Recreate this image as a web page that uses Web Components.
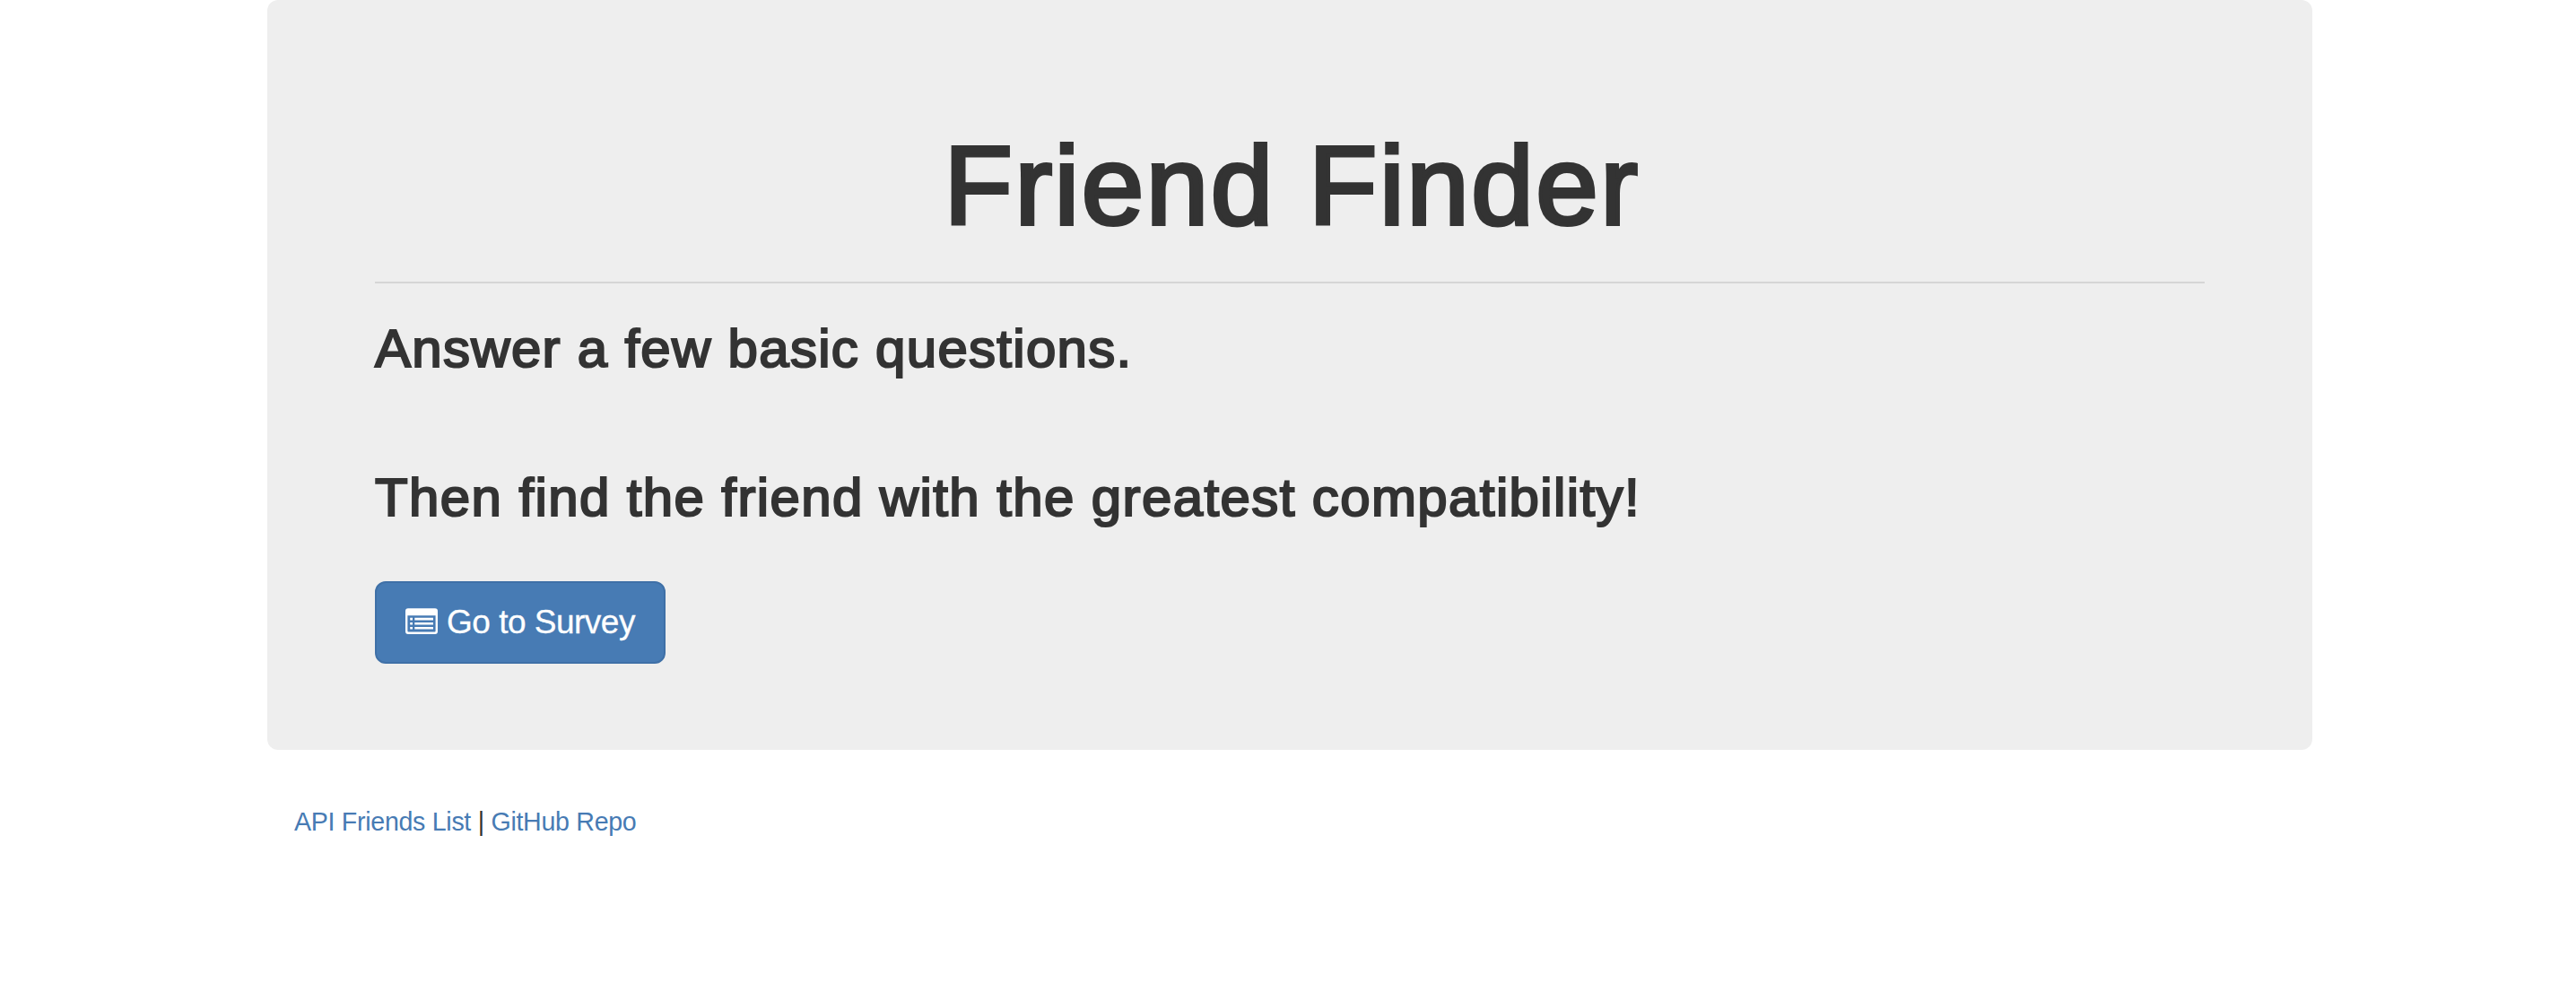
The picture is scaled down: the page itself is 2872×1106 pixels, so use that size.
<!DOCTYPE html>
<html lang="en">
<head>
<meta charset="utf-8">
<title>Friend Finder</title>
<style>
body { margin: 0; background: #fff; color: #333; font-family: "Liberation Sans", Arial, sans-serif; }
</style>
</head>
<body>
<friend-page>
  <jumbo-panel>
    <page-title slot="title">Friend Finder</page-title>
    <lead-line style="--ls:1.29px">Answer a few basic questions.</lead-line>
    <lead-line style="--ls:1.39px">Then find the friend with the greatest compatibility!</lead-line>
    <survey-button slot="action">Go to Survey</survey-button>
  </jumbo-panel>
  <page-footer></page-footer>
</friend-page>
<script>
const define = (name, html) => customElements.define(name, class extends HTMLElement {
  constructor() {
    super();
    this.attachShadow({ mode: "open" }).innerHTML = html;
  }
});

define("friend-page", `
<style>
:host { display: flex; flex-direction: column; width: 2280px; margin-left: 298px; }
</style><slot></slot>`);

define("jumbo-panel", `
<style>
:host { display: flex; flex-direction: column; align-items: stretch; box-sizing: border-box; height: 836px; padding: 137px 120px 96px; background: #eee; border-radius: 12px; }
hr { width: 100%; height: 2px; margin: 38px 0 40px; border: 0; background: #d5d5d5; }
.lines { display: flex; flex-direction: column; gap: 100px; }
.action { display: flex; margin-top: 60px; }
</style>
<slot name="title"></slot>
<hr>
<div class="lines"><slot></slot></div>
<div class="action"><slot name="action"></slot></div>`);

define("page-title", `
<style>
:host { display: block; height: 139px; }
h1 { margin: 0; padding-left: 5px; font-size: 125px; font-weight: 400; line-height: 139px; text-align: center; letter-spacing: 2.5px; -webkit-text-stroke: 4.2px #333; white-space: nowrap; }
</style><h1><slot></slot></h1>`);

define("lead-line", `
<style>
:host { display: block; height: 66px; }
h2 { margin: 0; font-size: 60px; font-weight: 400; line-height: 66px; letter-spacing: var(--ls, 0); -webkit-text-stroke: 2.2px #333; white-space: nowrap; }
</style><h2><slot></slot></h2>`);

define("survey-button", `
<style>
:host { display: block; }
button { display: flex; align-items: center; box-sizing: border-box; width: 324px; height: 92px; padding: 0 0 0 32px; border: 2px solid #3f70a7; border-radius: 12px; background: #477bb4; color: #fff; font: 37px/48px "Liberation Sans", Arial, sans-serif; letter-spacing: -.5px; -webkit-text-stroke: .3px #fff; white-space: nowrap; }
svg { display: block; flex: none; margin: -4px 10px 0 0; }
</style>
<button type="button"><svg width="36" height="29" viewBox="0 0 36 29" fill="#fff"><path fill-rule="evenodd" d="M3 .3H33Q36 .3 36 3.3V26Q36 29 33 29H3Q0 29 0 26V3.3Q0 .3 3 .3ZM2.4 8.2V25.6Q2.4 26.6 3.4 26.6H32.6Q33.6 26.6 33.6 25.6V8.2Z"/><path d="M5.2 10.8H8V13.4H5.2ZM10.3 10.8H31V13.4H10.3ZM5.2 15.9H8V18.5H5.2ZM10.3 15.9H31V18.5H10.3ZM5.2 21H8V23.6H5.2ZM10.3 21H31V23.6H10.3Z"/></svg><span><slot></slot></span></button>`);

define("page-footer", `
<style>
:host { display: flex; align-items: baseline; margin-top: 60px; padding-left: 30px; font-size: 28.6px; line-height: 40px; letter-spacing: -.3px; white-space: pre; }
a { color: #477bb4; text-decoration: none; }
</style><a href="#">API Friends List</a><span> | </span><a href="#">GitHub Repo</a>`);
</script>
</body>
</html>
